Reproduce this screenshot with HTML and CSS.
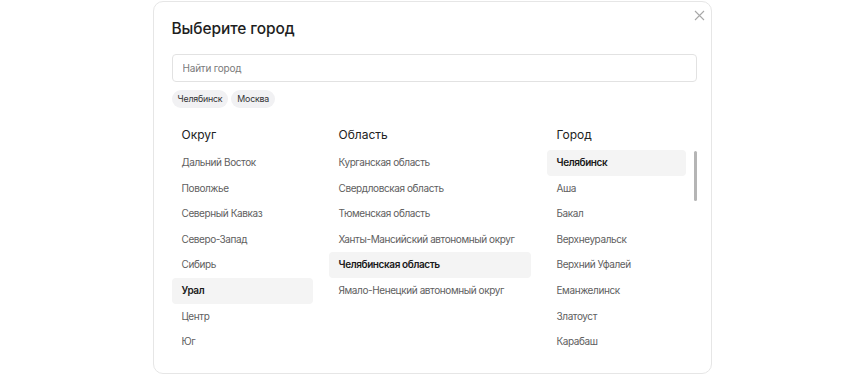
FILE: index.html
```html
<!DOCTYPE html>
<html lang="ru">
<head>
<meta charset="utf-8">
<title>Выберите город</title>
<link rel="stylesheet" href="styles.css">
</head>
<body>
<div class="modal">
  <button class="close" aria-label="Закрыть">
    <svg width="11" height="11" viewBox="0 0 11 11"><path d="M1 1L10 10M10 1L1 10" stroke="#a8a8a8" stroke-width="1.1" fill="none"/></svg>
  </button>
  <h1 class="title">Выберите город</h1>
  <div class="search"><input type="text" placeholder="Найти город"></div>
  <div class="chips">
    <span class="chip">Челябинск</span>
    <span class="chip">Москва</span>
  </div>
  <div class="columns">
    <div class="col">
      <div class="col-head">Округ</div>
      <ul class="list">
        <li class="item">Дальний Восток</li>
        <li class="item">Поволжье</li>
        <li class="item">Северный Кавказ</li>
        <li class="item">Северо-Запад</li>
        <li class="item">Сибирь</li>
        <li class="item active">Урал</li>
        <li class="item">Центр</li>
        <li class="item">Юг</li>
      </ul>
    </div>
    <div class="col">
      <div class="col-head">Область</div>
      <ul class="list">
        <li class="item">Курганская область</li>
        <li class="item">Свердловская область</li>
        <li class="item">Тюменская область</li>
        <li class="item">Ханты-Мансийский автономный округ</li>
        <li class="item active">Челябинская область</li>
        <li class="item">Ямало-Ненецкий автономный округ</li>
      </ul>
    </div>
    <div class="col col-city">
      <div class="col-head">Город</div>
      <div class="scroll-area">
        <ul class="list">
          <li class="item active">Челябинск</li>
          <li class="item">Аша</li>
          <li class="item">Бакал</li>
          <li class="item">Верхнеуральск</li>
          <li class="item">Верхний Уфалей</li>
          <li class="item">Еманжелинск</li>
          <li class="item">Златоуст</li>
          <li class="item">Карабаш</li>
        </ul>
        <div class="thumb"></div>
      </div>
    </div>
  </div>
</div>
</body>
</html>
```
FILE: styles.css
```css
* { box-sizing: border-box; }
html, body {
  margin: 0;
  padding: 0;
  background: #fff;
  font-family: Inter, "Noto Sans", sans-serif;
  color: #222;
}
.modal {
  position: relative;
  width: 559px;
  height: 373px;
  margin: 1px auto 0;
  border: 1px solid #e6e6e6;
  border-radius: 10px;
  padding: 17px 14px 0 18px;
  overflow: hidden;
}
.close {
  position: absolute;
  top: 6px;
  right: 4px;
  width: 15px;
  height: 15px;
  padding: 2px;
  border: 0;
  background: none;
  display: flex;
  align-items: center;
  justify-content: center;
}
.title {
  margin: 0;
  font-size: 15.5px;
  line-height: 20px;
  font-weight: 500;
  letter-spacing: -0.1px;
  color: #1e1e1e;
}
.search {
  margin-top: 15px;
}
.search input {
  display: block;
  width: 100%;
  height: 28px;
  border: 1px solid #e2e2e2;
  border-radius: 4px;
  padding: 0 10px;
  font-family: inherit;
  font-size: 10px;
  letter-spacing: -0.2px;
  color: #333;
  outline: none;
}
.search input::placeholder { color: #7a7a7a; }
.chips {
  display: flex;
  gap: 3px;
  margin-top: 8px;
}
.chip {
  height: 18px;
  line-height: 18px;
  padding: 0 6px;
  border-radius: 9px;
  background: #f1f1f3;
  font-size: 8.8px;
  letter-spacing: -0.2px;
  color: #333;
}
.columns {
  display: grid;
  grid-template-columns: 141px 202px 1fr;
  column-gap: 16px;
  margin-top: 17px;
}
.col-head {
  font-size: 12px;
  line-height: 20px;
  padding-left: 10px;
  margin-bottom: 5px;
  color: #222;
}
.list {
  list-style: none;
  margin: 0;
  padding: 0;
}
.item {
  height: 25.6px;
  line-height: 25.6px;
  padding-left: 10px;
  font-size: 10px;
  letter-spacing: -0.4px;
  color: #606060;
  border-radius: 4px;
  white-space: nowrap;
}
.item.active {
  background: #f4f4f4;
  color: #1a1a1a;
  font-weight: 600;
}
.scroll-area {
  position: relative;
  padding-right: 11px;
}
.thumb {
  position: absolute;
  top: 1px;
  right: 0;
  width: 3px;
  height: 50px;
  border-radius: 2px;
  background: #b5b5b5;
}
```
